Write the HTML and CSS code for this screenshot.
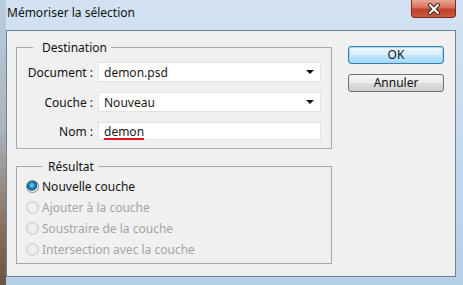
FILE: index.html
```html
<!DOCTYPE html>
<html lang="fr">
<head>
    <meta charset="UTF-8">
    <title>Mémoriser la sélection</title>
    <link rel="stylesheet" href="styles.css">
</head>
<body>

<div class="window">
    <div class="titlebar">
        <div class="title">Mémoriser la sélection</div>
        <div class="close-btn">
            <svg width="14" height="12" viewBox="0 0 14 12">
                <path d="M3 2 L11 10 M11 2 L3 10" stroke="#3a2420" stroke-width="4" stroke-linecap="round"/>
                <path d="M3 2 L11 10 M11 2 L3 10" stroke="#fff" stroke-width="2.2" stroke-linecap="round"/>
            </svg>
        </div>
    </div>

    <div class="client">
        <div class="groups">
            <fieldset class="group group-dest">
                <legend class="legend-dest">Destination</legend>
                <div class="form-grid">
                    <label class="field-label">Document :</label>
                    <div class="select"><span>demon.psd</span><span class="arrow"></span></div>

                    <label class="field-label">Couche :</label>
                    <div class="select"><span>Nouveau</span><span class="arrow"></span></div>

                    <label class="field-label">Nom :</label>
                    <div class="text-input"><span class="marked">demon</span></div>
                </div>
            </fieldset>

            <fieldset class="group group-res">
                <legend class="legend-res">Résultat</legend>
                <div class="radio-row"><span class="radio checked"></span>Nouvelle couche</div>
                <div class="radio-row disabled"><span class="radio"></span>Ajouter à la couche</div>
                <div class="radio-row disabled"><span class="radio"></span>Soustraire de la couche</div>
                <div class="radio-row disabled"><span class="radio"></span>Intersection avec la couche</div>
            </fieldset>
        </div>

        <div class="buttons">
            <button class="btn btn-default">OK</button>
            <button class="btn">Annuler</button>
        </div>
    </div>
</div>

</body>
</html>
```

FILE: styles.css
```css
* {
    box-sizing: border-box;
}

body {
    margin: 0;
    font-family: "Noto Sans", "Open Sans", Arial, sans-serif;
    font-size: 12px;
    color: #1a1a1a;
}

.window {
    width: 463px;
    height: 285px;
    display: flex;
    flex-direction: column;
    padding: 0 7px 8px 6px;
    background:
        linear-gradient(to bottom, #b9cde0 0%, #a9b4bc 45%, #8a6e5c 80%, #6e5444 100%) left top / 6px 100% no-repeat,
        linear-gradient(to bottom, #d2e2f2 0%, #c6daee 50%, #b6cfe9 100%);
}

.titlebar {
    height: 30px;
    display: flex;
    justify-content: space-between;
    align-items: flex-start;
}

.title {
    padding: 4px 0 0 1px;
    font-size: 12px;
    color: #111;
}

.close-btn {
    width: 45px;
    height: 18px;
    display: flex;
    align-items: center;
    justify-content: center;
    border: 1px solid #7a2a20;
    border-top: none;
    border-radius: 0 0 4px 4px;
    background: linear-gradient(to bottom, #e8a898 0%, #d8705c 45%, #c0412c 55%, #cc5a3e 100%);
}

.client {
    flex: 1;
    display: flex;
    gap: 16px;
    padding: 9px 11px 0 9px;
    background: #f0f0f0;
    border: 1px solid #6f8192;
}

.groups {
    display: flex;
    flex-direction: column;
    gap: 10px;
    width: 316px;
}

.group {
    margin: 0;
    padding: 0;
    min-width: 0;
    border: 1px solid #a8a8a8;
}

legend {
    font-size: 12px;
    line-height: 15px;
    color: #111;
}

.legend-dest {
    margin-left: 16px;
    padding: 0 4px 0 9px;
}

.legend-res {
    margin-left: 16px;
    padding: 0 4px 0 6px;
}

.group-dest {
    padding: 7px 10px 8px 0;
}

.form-grid {
    display: grid;
    grid-template-columns: 76px 1fr;
    column-gap: 5px;
    row-gap: 10px;
    align-items: center;
}

.field-label {
    text-align: right;
    color: #111;
}

.select, .text-input {
    height: 20px;
    display: flex;
    align-items: center;
    justify-content: space-between;
    padding: 0 6px 0 5px;
    background: #fff;
    border: 1px solid #e2e2e2;
}

.text-input {
    height: 18px;
}

.arrow {
    width: 0;
    height: 0;
    border-left: 4px solid transparent;
    border-right: 4px solid transparent;
    border-top: 4px solid #111;
}

.marked {
    text-decoration: underline #e0101a;
    text-decoration-thickness: 2px;
    text-underline-offset: 2px;
}

.group-res {
    padding: 2px 0 3px 9px;
}

.radio-row {
    height: 21px;
    display: flex;
    align-items: center;
    gap: 3px;
    color: #111;
}

.radio-row.disabled {
    color: #a4a4a4;
}

.radio {
    width: 13px;
    height: 13px;
    border-radius: 50%;
    border: 1px solid #c8c8c8;
    background: radial-gradient(circle, #f4f4f4 0%, #e4e4e4 100%);
}

.radio.checked {
    border-color: #7a8a98;
    background: radial-gradient(circle at 45% 40%, #7fd0f0 0%, #1f86b8 35%, #0e4f78 55%, #f4f4f4 62%, #e8e8e8 100%);
}

.buttons {
    display: flex;
    flex-direction: column;
    gap: 10px;
    width: 96px;
    padding-top: 6px;
}

.btn {
    height: 18px;
    padding: 0;
    font-family: inherit;
    font-size: 12px;
    line-height: 14px;
    color: #111;
    border: 1px solid #707070;
    border-radius: 3px;
    background: linear-gradient(to bottom, #f4f4f4 0%, #ebebeb 50%, #dddddd 51%, #cfcfcf 100%);
}

.btn-default {
    border-color: #3c7fb1;
    box-shadow: inset 0 0 0 1px #9fdaf5;
    background: linear-gradient(to bottom, #eaf6fd 0%, #d9f0fc 50%, #bee6fd 51%, #a7d9f5 100%);
}
```
